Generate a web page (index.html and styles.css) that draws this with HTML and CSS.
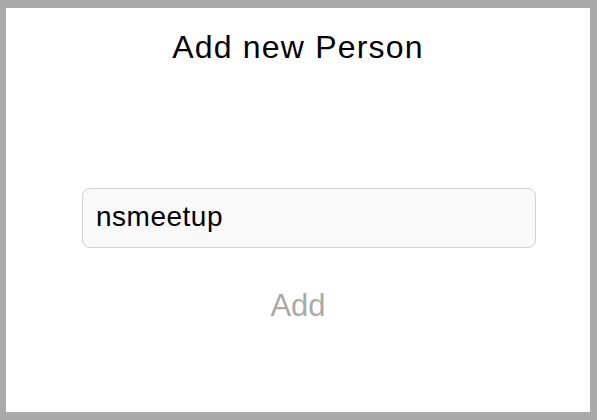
FILE: index.html
```html
<!DOCTYPE html>
<html>
<head>
<meta charset="utf-8">
<link rel="stylesheet" href="styles.css">
</head>
<body>
<div class="screen">
  <h1 class="title">Add new Person</h1>
  <div class="field"><input class="name-input" type="text" value="nsmeetup"></div>
  <button class="add-btn" type="button">Add</button>
</div>
</body>
</html>
```
FILE: styles.css
```css
html, body {
  margin: 0;
  padding: 0;
  height: 100%;
}
body {
  background: #aaaaaa;
  padding: 8px 7px 8px 6px;
  box-sizing: border-box;
  font-family: "Liberation Sans", Arial, sans-serif;
}
.screen {
  background: #ffffff;
  height: 100%;
  display: flex;
  flex-direction: column;
  align-items: center;
}
.title {
  margin: 19px 0 0 0;
  font-size: 32px;
  line-height: 40px;
  font-weight: normal;
  color: #000;
  letter-spacing: 1.2px;
}
.field {
  align-self: stretch;
  padding: 0 54px 0 76px;
  margin-top: 121px;
}
.name-input {
  display: block;
  width: 100%;
  box-sizing: border-box;
  height: 60px;
  border: 1px solid #d2d2d2;
  border-radius: 8px;
  background: #f9f9f9;
  padding: 0 12px 3px 13px;
  font-family: "Liberation Sans", Arial, sans-serif;
  font-size: 28px;
  letter-spacing: 0.5px;
  color: #000;
  outline: none;
}
.add-btn {
  margin-top: 38px;
  background: none;
  border: none;
  padding: 0;
  font-family: "Liberation Sans", Arial, sans-serif;
  font-size: 31px;
  line-height: 40px;
  color: #aaaaaa;
}
```
